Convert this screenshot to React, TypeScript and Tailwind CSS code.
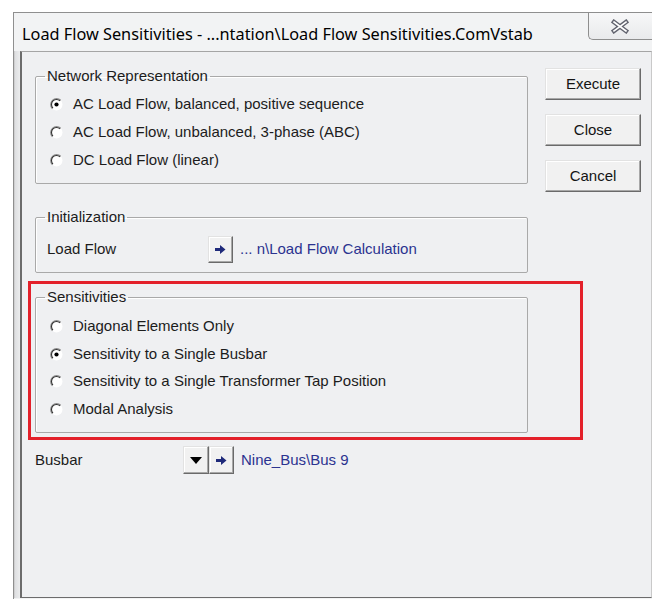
import React from "react";

function Radio({ checked }: { checked?: boolean }) {
  return (
    <svg width="13" height="13" viewBox="0 0 13 13" className="shrink-0">
      <circle cx="6.5" cy="6.5" r="6" fill="#ffffff" />
      <path d="M2.26 10.74 A6 6 0 0 1 10.74 2.26" fill="none" stroke="#8d8d8d" strokeWidth="1.1" />
      <path d="M2.96 10.04 A5 5 0 0 1 10.04 2.96" fill="none" stroke="#333333" strokeWidth="1.1" />
      {checked && <circle cx="6.5" cy="6.5" r="2.1" fill="#000000" />}
    </svg>
  );
}

function Option({ label, checked, h }: { label: string; checked?: boolean; h: "28" | "27" }) {
  return (
    <div className={`flex items-center gap-[10px] ${h === "28" ? "h-[28px]" : "h-[27px]"}`}>
      <Radio checked={checked} />
      <span>{label}</span>
    </div>
  );
}

// classic raised push button frame
const raised =
  "bg-[#f1f1f1] border border-t-[#e2e2e2] border-l-[#e2e2e2] border-r-[#6a6a6a] border-b-[#6a6a6a] shadow-[inset_-1px_-1px_0_#a8a8a8,inset_1px_1px_0_#ffffff]";

function PushButton({ label }: { label: string }) {
  return (
    <div className={`h-[32px] w-[96px] flex items-center justify-center ${raised}`}>
      <span className="text-[#141414]">{label}</span>
    </div>
  );
}

function ArrowIcon() {
  return (
    <svg width="11" height="9" viewBox="0 0 11 9">
      <polygon points="0,3 5,3 5,0 10.5,4.5 5,9 5,6 0,6" fill="#1f2a7a" />
    </svg>
  );
}

function DownIcon() {
  return (
    <svg width="12" height="7" viewBox="0 0 12 7">
      <polygon points="0,0 12,0 6,7" fill="#000000" />
    </svg>
  );
}

function SmallButton({ children, w, h }: { children: React.ReactNode; w: "25" | "26"; h: "27" | "28" }) {
  return (
    <div
      className={`flex items-center justify-center shrink-0 ${w === "25" ? "w-[25px]" : "w-[26px]"} ${
        h === "27" ? "h-[27px]" : "h-[28px]"
      } ${raised}`}
    >
      {children}
    </div>
  );
}

function Group({ title, children }: { title: string; children: React.ReactNode }) {
  return (
    <fieldset className="w-[493px] border border-[#a9a9a9] rounded-[2px] shadow-[inset_1px_1px_0_#ffffff]">
      <legend className="ml-[9px] px-[2px] leading-[18px] text-[#1c1c1c]">{title}</legend>
      {children}
    </fieldset>
  );
}

export default function App() {
  return (
    <div
      className="w-[652px] h-[599px] bg-white overflow-hidden text-[15px] text-[#1c1c1c]"
      style={{ fontFamily: '"Liberation Sans", Arial, sans-serif' }}
    >
      <div className="ml-[13px] mt-[12px] w-[639px] h-[587px] flex flex-col border-l border-t border-[#8f8f8f] bg-[#f2f3f4]">
        {/* caption */}
        <div className="h-[38px] flex justify-between shrink-0">
          <div
            className="pl-[8px] pt-[4px] flex items-center text-[16.3px] text-black"
            style={{ fontFamily: '"Noto Sans", "Open Sans", sans-serif' }}
          >
            Load Flow Sensitivities - ...ntation\Load Flow Sensitivities.ComVstab
          </div>
          <div className="-mt-px w-[64px] h-[28px] shrink-0 border border-[#8e8e8e] border-r-0 rounded-bl-[5px] bg-gradient-to-b from-[#f7f7f8] to-[#e9eaec] flex items-center justify-center pr-[2px]">
            <svg width="20" height="15" viewBox="0 0 20 15">
              <path d="M4 3 L16 12 M16 3 L4 12" stroke="#62646f" strokeWidth="4.4" strokeLinecap="square" />
              <path d="M4 3 L16 12 M16 3 L4 12" stroke="#ffffff" strokeWidth="1.6" strokeLinecap="square" />
            </svg>
          </div>
        </div>

        {/* frame + client */}
        <div className="flex-1 flex pb-px">
          <div className="w-[6px] bg-gradient-to-r from-[#dedfe1] to-[#ebeced] border-l border-[#cfcfd0]" />
          <div className="flex-1 bg-[#eff0f2] border-l-2 border-l-[#6c6c6c] border-t border-t-[#a5a5a5] border-b border-b-[#6c6c6c] border-r border-r-[#c9c9c9] pl-[13px] pt-[15px]">
            <div className="flex items-start">
              {/* left column */}
              <div className="w-[493px] flex flex-col">
                <Group title="Network Representation">
                  <div className="pl-[14px] pt-[5px] pb-[9px]">
                    <Option h="28" checked label="AC Load Flow, balanced, positive sequence" />
                    <Option h="28" label="AC Load Flow, unbalanced, 3-phase (ABC)" />
                    <Option h="28" label="DC Load Flow (linear)" />
                  </div>
                </Group>

                <div className="mt-[24px]">
                  <Group title="Initialization">
                    <div className="pl-[11px] pt-[10px] pb-[9px] flex items-center">
                      <span className="w-[161px] shrink-0">Load Flow</span>
                      <SmallButton w="25" h="27">
                        <ArrowIcon />
                      </SmallButton>
                      <span className="ml-[7px] text-[#2b3390]">... n\Load Flow Calculation</span>
                    </div>
                  </Group>
                </div>

                {/* highlighted section */}
                <div className="mt-[8px] -ml-[7px] w-[555px] border-[3px] border-[#e3202a] pl-[4px] pt-[4px] pb-[4px]">
                  <Group title="Sensitivities">
                    <div className="pl-[14px] pt-[7px] pb-[9px]">
                      <Option h="27" label="Diagonal Elements Only" />
                      <Option h="28" checked label="Sensitivity to a Single Busbar" />
                      <Option h="27" label="Sensitivity to a Single Transformer Tap Position" />
                      <Option h="28" label="Modal Analysis" />
                    </div>
                  </Group>
                </div>

                <div className="mt-[6px] flex items-center">
                  <span className="w-[148px] shrink-0">Busbar</span>
                  <SmallButton w="26" h="28">
                    <DownIcon />
                  </SmallButton>
                  <SmallButton w="25" h="28">
                    <ArrowIcon />
                  </SmallButton>
                  <span className="ml-[7px] text-[#2b3390]">Nine_Bus\Bus 9</span>
                </div>
              </div>

              {/* command buttons */}
              <div className="ml-[17px] mt-[1px] flex flex-col gap-[14px]">
                <PushButton label="Execute" />
                <PushButton label="Close" />
                <PushButton label="Cancel" />
              </div>
            </div>
          </div>
        </div>
      </div>
    </div>
  );
}
